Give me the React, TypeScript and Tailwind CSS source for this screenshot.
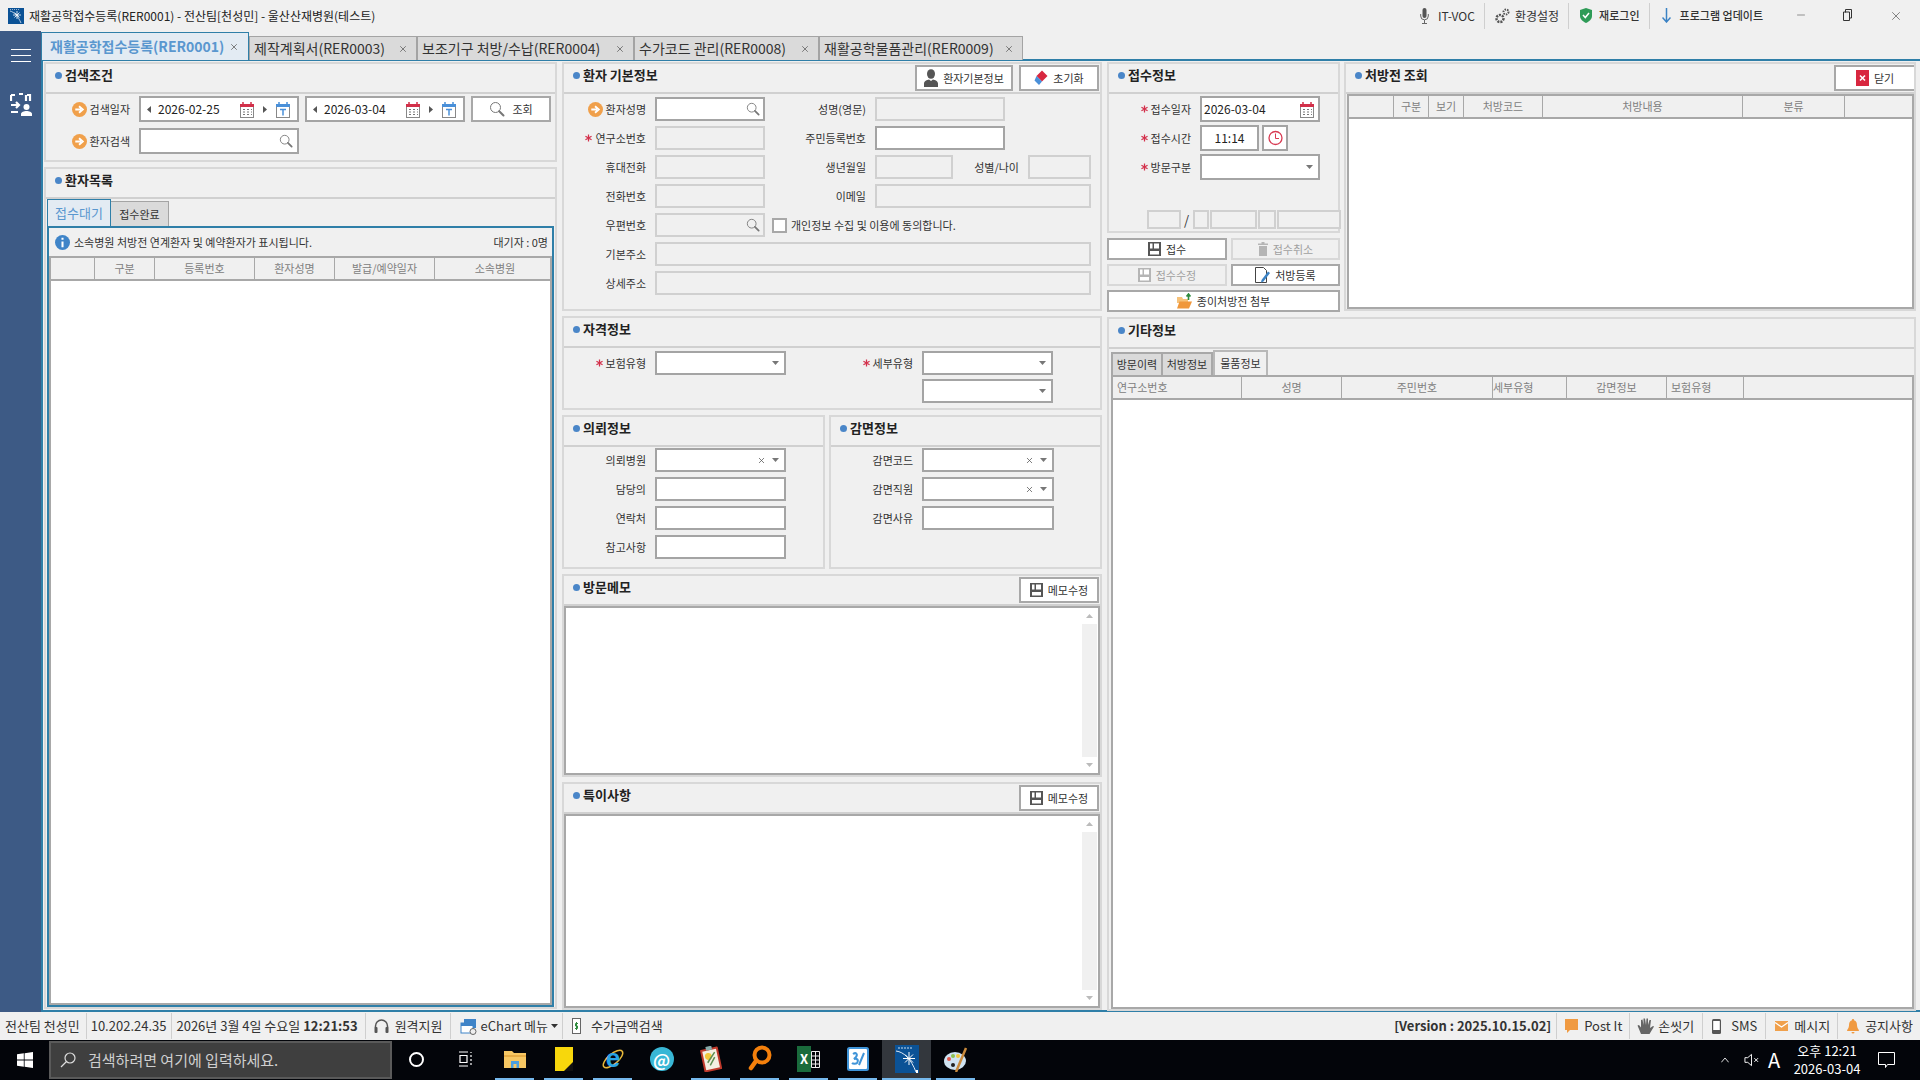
import React from "react";
import { X, Minus } from "lucide-react";

type P = { className?: string; children?: React.ReactNode };

const Search = ({ s = 14, c = "#777" }: { s?: number; c?: string }) => (
  <svg width={s} height={s} viewBox="0 0 16 16" fill="none" className="shrink-0">
    <circle cx="6.5" cy="6.5" r="5" stroke={c} strokeWidth="1" />
    <path d="M10.2 10.2 14.5 14.5" stroke={c} strokeWidth="2" strokeLinecap="round" />
  </svg>
);
const Arrow = () => (
  <svg width="15" height="15" viewBox="0 0 16 16" className="shrink-0">
    <circle cx="8" cy="8" r="8" fill="#f0a04b" />
    <path d="M3.5 8h6M7.5 4.5 11.5 8l-4 3.5" stroke="#fff" strokeWidth="2" fill="none" />
  </svg>
);
const Star = () => (
  <svg width="7" height="8" viewBox="0 0 8 8" className="shrink-0">
    <path d="M4 0v8M.5 2l7 4M7.5 2l-7 4" stroke="#d32f4a" strokeWidth="1.4" />
  </svg>
);
const Cal = ({ top = "#d2304a", t = false }: { top?: string; t?: boolean }) => (
  <svg width="16" height="17" viewBox="0 0 16 17" className="shrink-0">
    <rect x="1.5" y="3.5" width="13" height="13" fill="#fff" stroke="#888" />
    <rect x="1" y="3" width="14" height="3" fill={top} />
    <path d="M4 1v3M12 1v3" stroke={top} strokeWidth="1.5" />
    {t ? (
      <path d="M5 8.5h6M8 8.5v6" stroke={top} strokeWidth="1.5" />
    ) : (
      <path d="M4 8.5h2m2 0h2m2 0h1M4 11h2m2 0h2m2 0h1M4 13.5h2m2 0h2m2 0h1" stroke="#777" strokeWidth="1" />
    )}
  </svg>
);
const Tri = ({ d = "l" }: { d?: "l" | "r" }) => (
  <svg width="4" height="7" viewBox="0 0 4 7" className="shrink-0">
    <path d={d === "l" ? "M4 0v7L0 3.5z" : "M0 0v7l4-3.5z"} fill="#555" />
  </svg>
);
const Caret = () => (
  <svg width="7" height="4" viewBox="0 0 7 4" className="shrink-0">
    <path d="M0 0h7L3.5 4z" fill="#777" />
  </svg>
);
const Floppy = ({ c = "#555" }: { c?: string }) => (
  <svg width="13" height="14" viewBox="0 0 13 14" className="shrink-0">
    <path d="M0 0h13v14H0z" fill={c} />
    <path d="M2 1.5h2.5v5H2zM6 1.5h5v5H6zM2 9h9v3.5H2z" fill="#fff" />
  </svg>
);
const Person = () => (
  <svg width="14" height="18" viewBox="0 0 14 18" className="shrink-0">
    <ellipse cx="7" cy="5" rx="4" ry="4.8" fill="#555" />
    <path d="M0 18v-3.5C0 12 3 11 5 10.5L7 12l2-1.500c2 .5 5 1.500 5 4V18z" fill="#555" />
  </svg>
);
const Eraser = () => (
  <svg width="14" height="16" viewBox="0 0 14 16" className="shrink-0">
    <path d="M8 .5 13.500 6 8 11.500 2.500 6z" fill="#d8273f" />
    <path d="M2.500 6 8 11.500 5 15 .5 10.500z" fill="#4a90d9" />
  </svg>
);
const Trash = () => (
  <svg width="10" height="14" viewBox="0 0 10 14" className="shrink-0">
    <path d="M0 1.500h10V3H0zM3.500 0h3v1.500h-3zM1 4h8v10H1z" fill="#b5b5b5" />
  </svg>
);
const Edit = () => (
  <svg width="15" height="16" viewBox="0 0 15 16" className="shrink-0">
    <path d="M.5.5h8l3 3v12H.5z" fill="#fff" stroke="#444" />
    <path d="M13 4.500 15 6 8.500 14.500 6 15.500l.5-2.500z" fill="#3b82c4" />
  </svg>
);
const Folder = () => (
  <svg width="15" height="16" viewBox="0 0 15 16" className="shrink-0">
    <path d="M0 4h5l1 2h5v4H0z" fill="#f6c27a" />
    <path d="M0 15.500 2.500 8.500H15l-3 7z" fill="#f0983c" />
    <path d="M11.500 7V2M9.500 3.500l2-2.500 2 2.500" stroke="#2e8b3d" strokeWidth="1.600" fill="none" />
  </svg>
);
const Clock = () => (
  <svg width="15" height="18" viewBox="0 0 15 18" className="shrink-0">
    <circle cx="7.500" cy="9" r="6.500" fill="none" stroke="#d83a52" strokeWidth="1.300" />
    <path d="M7.500 4.500V9.500H11" fill="none" stroke="#d83a52" />
  </svg>
);

const Box = ({ className = "", children, off }: P & { off?: boolean }) => (
  <div
    className={
      "flex shrink-0 items-center text-[12px] text-[#222] border-2 " +
      (off ? "border-[#d0d0d0] bg-[#f0f0f0] " : "border-[#a4a4a4] bg-white ") +
      className
    }
  >
    {children}
  </div>
);

const Label = ({ className = "", star, arrow, children }: P & { star?: boolean; arrow?: boolean }) => (
  <div className={"flex shrink-0 items-center justify-end gap-[3px] text-[11px] text-[#333] " + className}>
    {star && <Star />}
    {arrow && <Arrow />}
    <span>{children}</span>
  </div>
);

const Btn = ({ className = "", children, off }: P & { off?: boolean }) => (
  <div
    className={
      "flex shrink-0 items-center justify-center gap-[5px] border-2 text-[11px] " +
      (off ? "border-[#d8d8d8] bg-[#f0f0f0] text-[#a0a0a0] " : "border-[#a8a8a8] bg-white text-[#333] ") +
      className
    }
  >
    {children}
  </div>
);

const Panel = ({
  className = "",
  title,
  action,
  children,
}: P & { title: string; action?: React.ReactNode }) => (
  <section className={"flex shrink-0 flex-col border-2 border-[#d8d8d8] " + className}>
    <header className="flex h-[30px] shrink-0 items-start justify-between border-b-[2px] border-[#d0d0d0] pl-[9px]">
      <div className="flex items-center gap-[3px] pt-[1px] text-[13px] font-bold leading-[20px] text-[#222]">
        <span className="h-[7px] w-[7px] rounded-full bg-[#4a86c8]" />
        {title}
      </div>
      {action}
    </header>
    {children}
  </section>
);

const Grid = ({
  className = "",
  cols,
}: {
  className?: string;
  cols: [string, string, string?][];
}) => (
  <div className={"flex flex-col border-2 border-[#a8a8a8] bg-white " + className}>
    <div className="flex h-[23px] shrink-0 border-b-2 border-[#a8a8a8] bg-[#f0f0f0]">
      {cols.map(([w, t, al], i) => (
        <div
          key={i}
          className={
            "flex shrink-0 items-center border-r border-[#a8a8a8] text-[11px] text-[#808080] " +
            (al || "justify-center ") +
            " " +
            w
          }
        >
          {t}
        </div>
      ))}
    </div>
  </div>
);

const DateField = ({ v, w }: { v: string; w?: string }) => (
  <Box className={"h-[26px] w-[160px] px-[6px] " + (w || "")}>
    <Tri />
    <span className="ml-[7px] w-[87px]">{v}</span>
    <Cal />
    <span className="mx-[8px]">
      <Tri d="r" />
    </span>
    <Cal top="#4a90d9" t />
  </Box>
);

const Scroll = () => (
  <div className="flex w-[15px] shrink-0 flex-col justify-between self-stretch bg-[#f0f0f0]">
    <div className="flex h-[16px] items-center justify-center bg-white">
      <svg width="7" height="4" viewBox="0 0 7 4">
        <path d="M0 4h7L3.500 0z" fill="#bbb" />
      </svg>
    </div>
    <div className="flex h-[16px] items-center justify-center bg-white">
      <svg width="7" height="4" viewBox="0 0 7 4">
        <path d="M0 0h7L3.500 4z" fill="#bbb" />
      </svg>
    </div>
  </div>
);

const Memo = ({ className = "", title }: { className?: string; title: string }) => (
  <Panel
    className={className}
    title={title}
    action={
      <Btn className="mr-px mt-px h-[26px] w-[80px]">
        <Floppy />
        메모수정
      </Btn>
    }
  >
    <div className="flex min-h-0 flex-1 justify-end border-2 border-[#a8a8a8] bg-white pr-px">
      <Scroll />
    </div>
  </Panel>
);

const Sep = ({ className = "" }: P) => <span className={"h-[26px] w-px shrink-0 bg-[#cfcfcf] " + className} />;

const TitleBar = () => (
  <div className="flex h-[31px] shrink-0 items-center bg-[#f0f0f0] text-[#222]">
    <svg width="16" height="16" viewBox="0 0 16 16" className="ml-[8px] shrink-0">
      <rect width="16" height="16" fill="#0b5296" />
      <path d="M2 3c4 1 8 5 11 12" stroke="#dfe9f5" strokeWidth=".8" fill="none" />
      <path d="M9 3v8M5 7h8M6.500 4.500l5 5M11.500 4.500l-5 5" stroke="#fff" strokeWidth=".8" />
      <path d="M2 1.500h9" stroke="#bcd" strokeWidth=".8" strokeDasharray="1 1" />
    </svg>
    <span className="ml-[5px] text-[12px] leading-none">재활공학접수등록(RER0001) - 전산팀[천성민] - 울산산재병원(테스트)</span>
    <div className="ml-auto flex items-center text-[#333]">
      <svg width="9" height="16" viewBox="0 0 9 16" className="shrink-0">
        <rect x="2.500" y="0" width="4" height="10" rx="2" fill="#555" />
        <path d="M.7 6v2a3.800 3.800 0 0 0 7.600 0V6M4.500 12v3M2 15.500h5" stroke="#666" fill="none" />
      </svg>
      <span className="ml-[9px] text-[12px]">IT-VOC</span>
      <Sep className="ml-[9px]" />
      <svg width="15" height="16" viewBox="0 0 15 16" className="ml-[10px] shrink-0">
        <circle cx="5" cy="10.500" r="3.500" fill="none" stroke="#555" strokeWidth="2.500" strokeDasharray="2 1" />
        <circle cx="11" cy="4" r="2.500" fill="none" stroke="#555" strokeWidth="2" strokeDasharray="1.500 1" />
      </svg>
      <span className="ml-[5px] text-[12px]">환경설정</span>
      <Sep className="ml-[9px]" />
      <svg width="12" height="15" viewBox="0 0 12 15" className="ml-[11px] shrink-0">
        <path d="M6 0 12 2v6c0 3.500-3 5.500-6 7-3-1.500-6-3.500-6-7V2z" fill="#2e9b57" />
        <path d="M3 7l2.300 2.500L9 5" stroke="#fff" strokeWidth="1.500" fill="none" />
      </svg>
      <span className="ml-[7px] text-[11px] font-medium">재로그인</span>
      <Sep className="ml-[9px]" />
      <svg width="9" height="15" viewBox="0 0 9 15" className="ml-[12px] shrink-0">
        <path d="M4.500 0v14M.5 9.500l4 4.500 4-4.500" stroke="#3b82c4" strokeWidth="1.500" fill="none" />
      </svg>
      <span className="ml-[9px] text-[11px] font-medium">프로그램 업데이트</span>
      <div className="ml-[14px] flex w-[143px] text-[#333]">
        <div className="flex w-[47px] justify-center">
          <Minus size={12} strokeWidth={1} />
        </div>
        <div className="flex w-[48px] justify-center">
          <svg width="11" height="12" viewBox="0 0 11 12" fill="none" stroke="#333">
            <path d="M2.500 3.500V.5h6v8.500H6.500M.5 3h6v8.500h-6z" />
          </svg>
        </div>
        <div className="flex w-[48px] justify-center">
          <X size={14} strokeWidth={1} />
        </div>
      </div>
    </div>
  </div>
);

const Tab = ({ className = "", children }: P) => (
  <div
    className={
      "mt-[4px] flex h-[24px] shrink-0 items-center justify-between border-x border-t border-[#a4a4a4] bg-[#dadada] pl-[4px] pr-[8px] text-[14px] text-[#333] " +
      className
    }
  >
    <span>{children}</span>
    <X size={10} color="#666" />
  </div>
);

const Tabs = () => (
  <div className="relative z-10 flex h-[29px] shrink-0 pt-px">
    <div className="flex h-[28px] w-[208px] shrink-0 items-center justify-between border-x border-t border-[#2f7fa8] bg-[#e3ebf3] pl-[8px] pr-[9px] text-[14px] font-bold text-[#5a97cf]">
      <span>재활공학접수등록(RER0001)</span>
      <X size={10} color="#666" />
    </div>
    <Tab className="w-[168px]">제작계획서(RER0003)</Tab>
    <Tab className="w-[217px]">보조기구 처방/수납(RER0004)</Tab>
    <Tab className="w-[185px]">수가코드 관리(RER0008)</Tab>
    <Tab className="w-[204px]">재활공학물품관리(RER0009)</Tab>
  </div>
);

const LeftColumn = () => (
  <div className="flex w-[513px] shrink-0 flex-col gap-[5px]">
    <Panel className="h-[100px]" title="검색조건">
      <div className="flex flex-col gap-[6px] pt-[2px]">
        <div className="flex items-center">
          <Label arrow className="w-[84px]">검색일자</Label>
          <DateField v="2026-02-25" w="ml-[9px]" />
          <DateField v="2026-03-04" w="ml-[6px]" />
          <Btn className="ml-[6px] h-[26px] w-[80px]">
            <Search s={16} />
            <span className="ml-[2px]">조회</span>
          </Btn>
        </div>
        <div className="flex items-center">
          <Label arrow className="w-[84px]">환자검색</Label>
          <Box className="ml-[9px] h-[26px] w-[160px] justify-end pr-[4px]">
            <Search />
          </Box>
        </div>
      </div>
    </Panel>
    <Panel className="h-[842px]" title="환자목록">
      <div className="flex h-[27px] shrink-0 items-end pl-px">
        <div className="flex h-[27px] w-[64px] items-center justify-center border-x border-t border-[#2f7fa8] bg-[#e3ebf3] text-[13px] text-[#5a97cf]">
          접수대기
        </div>
        <div className="flex h-[25px] w-[58px] items-center justify-center border-r border-t border-[#a4a4a4] bg-[#dadada] text-[11px] text-[#333]">
          접수완료
        </div>
      </div>
      <div className="mx-[1px] flex min-h-0 flex-1 flex-col border-2 border-[#2f7fa8]">
        <div className="flex h-[28px] shrink-0 items-center justify-between pl-[6px] pr-[4px] text-[11px] text-[#333]">
          <div className="flex items-center gap-[4px]">
            <svg width="15" height="15" viewBox="0 0 16 16" className="shrink-0">
              <circle cx="8" cy="8" r="8" fill="#3f84c8" />
              <path d="M8 3v2M8 7v6" stroke="#fff" strokeWidth="2.200" />
            </svg>
            소속병원 처방전 연계환자 및 예약환자가 표시됩니다.
          </div>
          <span>대기자 : 0명</span>
        </div>
        <Grid
          className="flex-1"
          cols={[
            ["w-[44px]", ""],
            ["w-[60px]", "구분"],
            ["w-[100px]", "등록번호"],
            ["w-[80px]", "환자성명"],
            ["w-[100px]", "발급/예약일자"],
            ["w-[120px] border-r-0", "소속병원"],
          ]}
        />
      </div>
    </Panel>
  </div>
);

const BasicInfo = () => (
  <Panel
    className="h-[249px]"
    title="환자 기본정보"
    action={
      <div className="mr-px mt-px flex gap-[6px]">
        <Btn className="h-[26px] w-[98px]">
          <Person />
          환자기본정보
        </Btn>
        <Btn className="h-[26px] w-[80px]">
          <Eraser />
          초기화
        </Btn>
      </div>
    }
  >
    <div className="flex flex-col gap-[5px] pt-[3px]">
      <div className="flex h-[24px]">
        <Label arrow className="w-[82px]">환자성명</Label>
        <Box className="ml-[9px] w-[110px] justify-end pr-[3px]">
          <Search />
        </Box>
        <Label className="w-[101px]">성명(영문)</Label>
        <Box off className="ml-[9px] w-[130px]" />
      </div>
      <div className="flex h-[24px]">
        <Label star className="w-[82px]">연구소번호</Label>
        <Box off className="ml-[9px] w-[110px]" />
        <Label className="w-[101px]">주민등록번호</Label>
        <Box className="ml-[9px] w-[130px]" />
      </div>
      <div className="flex h-[24px]">
        <Label className="w-[82px]">휴대전화</Label>
        <Box off className="ml-[9px] w-[110px]" />
        <Label className="w-[101px]">생년월일</Label>
        <Box off className="ml-[9px] w-[78px]" />
        <Label className="w-[66px]">성별/나이</Label>
        <Box off className="ml-[9px] w-[63px]" />
      </div>
      <div className="flex h-[24px]">
        <Label className="w-[82px]">전화번호</Label>
        <Box off className="ml-[9px] w-[110px]" />
        <Label className="w-[101px]">이메일</Label>
        <Box off className="ml-[9px] w-[216px]" />
      </div>
      <div className="flex h-[24px] items-center">
        <Label className="w-[82px]">우편번호</Label>
        <Box off className="ml-[9px] h-[24px] w-[110px] justify-end pr-[3px]">
          <Search />
        </Box>
        <span className="ml-[7px] h-[15px] w-[15px] shrink-0 border-2 border-[#a8a8a8] bg-white" />
        <span className="ml-[4px] text-[11px] text-[#333]">개인정보 수집 및 이용에 동의합니다.</span>
      </div>
      <div className="flex h-[24px]">
        <Label className="w-[82px]">기본주소</Label>
        <Box off className="ml-[9px] w-[436px]" />
      </div>
      <div className="flex h-[24px]">
        <Label className="w-[82px]">상세주소</Label>
        <Box off className="ml-[9px] w-[436px]" />
      </div>
    </div>
  </Panel>
);

const Sel = ({ className = "", clear }: { className?: string; clear?: boolean }) => (
  <Box className={"h-[24px] justify-end gap-[6px] pr-[5px] " + className}>
    {clear && <X size={9} color="#555" />}
    <Caret />
  </Box>
);

const MiddleColumn = () => (
  <div className="flex w-[540px] shrink-0 flex-col gap-[5px]">
    <BasicInfo />
    <Panel className="h-[94px]" title="자격정보">
      <div className="flex flex-col gap-[4px] pt-[3px]">
        <div className="flex">
          <Label star className="w-[82px]">보험유형</Label>
          <Sel className="ml-[9px] w-[131px]" />
          <Label star className="w-[127px]">세부유형</Label>
          <Sel className="ml-[9px] w-[131px]" />
        </div>
        <div className="flex pl-[358px]">
          <Sel className="w-[131px]" />
        </div>
      </div>
    </Panel>
    <div className="flex h-[154px] shrink-0 gap-[4px]">
      <Panel className="h-full w-[263px]" title="의뢰정보">
        <div className="flex flex-col gap-[5px] pt-[1px]">
          <div className="flex">
            <Label className="w-[82px]">의뢰병원</Label>
            <Sel clear className="ml-[9px] w-[131px]" />
          </div>
          <div className="flex">
            <Label className="w-[82px]">담당의</Label>
            <Box className="ml-[9px] h-[24px] w-[131px]" />
          </div>
          <div className="flex">
            <Label className="w-[82px]">연락처</Label>
            <Box className="ml-[9px] h-[24px] w-[131px]" />
          </div>
          <div className="flex">
            <Label className="w-[82px]">참고사항</Label>
            <Box className="ml-[9px] h-[24px] w-[131px]" />
          </div>
        </div>
      </Panel>
      <Panel className="h-full w-[273px]" title="감면정보">
        <div className="flex flex-col gap-[5px] pt-[1px]">
          <div className="flex">
            <Label className="w-[82px]">감면코드</Label>
            <Sel clear className="ml-[9px] w-[132px]" />
          </div>
          <div className="flex">
            <Label className="w-[82px]">감면직원</Label>
            <Sel clear className="ml-[9px] w-[132px]" />
          </div>
          <div className="flex">
            <Label className="w-[82px]">감면사유</Label>
            <Box className="ml-[9px] h-[24px] w-[132px]" />
          </div>
        </div>
      </Panel>
    </div>
    <Memo className="h-[203px]" title="방문메모" />
    <Memo className="h-[228px]" title="특이사항" />
  </div>
);

const Reception = () => (
  <div className="flex w-[233px] shrink-0 flex-col gap-[4px]">
    <Panel className="h-[171px]" title="접수정보">
      <div className="flex flex-col gap-[3px] pt-[2px]">
        <div className="flex">
          <Label star className="w-[82px]">접수일자</Label>
          <Box className="ml-[9px] h-[26px] w-[120px] justify-between pl-[2px] pr-[3px]">
            2026-03-04
            <Cal />
          </Box>
        </div>
        <div className="flex">
          <Label star className="w-[82px]">접수시간</Label>
          <Box className="ml-[9px] h-[26px] w-[59px] justify-center">11:14</Box>
          <Box className="ml-[3px] h-[26px] w-[26px] justify-center">
            <Clock />
          </Box>
        </div>
        <div className="flex">
          <Label star className="w-[82px]">방문구분</Label>
          <Box className="ml-[9px] h-[26px] w-[120px] justify-end pr-[5px]">
            <Caret />
          </Box>
        </div>
      </div>
      <div className="mt-[30px] flex items-center pl-[38px] text-[13px] text-[#333]">
        <Box off className="h-[19px] w-[34px]" />
        <span className="mx-[3px] w-[3px]">/</span>
        <Box off className="ml-[3px] h-[19px] w-[16px]" />
        <Box off className="ml-px h-[19px] w-[47px]" />
        <Box off className="ml-px h-[19px] w-[18px]" />
        <Box off className="ml-px h-[19px] w-[64px]" />
      </div>
    </Panel>
    <div className="flex gap-[4px] pt-px">
      <Btn className="h-[22px] w-[120px]">
        <Floppy />
        접수
      </Btn>
      <Btn off className="h-[22px] w-[109px]">
        <Trash />
        접수취소
      </Btn>
    </div>
    <div className="flex gap-[4px]">
      <Btn off className="h-[22px] w-[120px]">
        <Floppy c="#b5b5b5" />
        접수수정
      </Btn>
      <Btn className="h-[22px] w-[109px]">
        <Edit />
        처방등록
      </Btn>
    </div>
    <Btn className="h-[22px] w-[233px]">
      <Folder />
      종이처방전 첨부
    </Btn>
  </div>
);

const Rx = () => (
  <Panel
    className="h-[249px] w-[572px]"
    title="처방전 조회"
    action={
      <Btn className="mt-px h-[26px] w-[80px] border-r-0">
        <svg width="13" height="16" viewBox="0 0 13 16" className="shrink-0">
          <rect width="13" height="16" fill="#d8273f" />
          <path d="M4 5.500 9 10.500M9 5.500l-5 5" stroke="#fff" strokeWidth="1.600" />
        </svg>
        닫기
      </Btn>
    }
  >
    <Grid
      className="ml-px h-[215px]"
      cols={[
        ["w-[45px]", ""],
        ["w-[35px]", "구분"],
        ["w-[35px]", "보기"],
        ["w-[79px]", "처방코드"],
        ["w-[200px]", "처방내용"],
        ["w-[102px]", "분류"],
        ["w-[70px] border-r-0", ""],
      ]}
    />
  </Panel>
);

const Other = () => (
  <Panel className="h-[694px]" title="기타정보">
    <div className="flex h-[26px] shrink-0 items-end pl-[2px]">
      <div className="flex h-[23px] w-[52px] items-center justify-center border-2 border-b-0 border-[#a8a8a8] bg-[#dadada] text-[11px] text-[#333]">방문이력</div>
      <div className="flex h-[23px] w-[50px] items-center justify-center border-y-2 border-r-2 border-b-0 border-[#a8a8a8] bg-[#dadada] text-[11px] text-[#333]">처방정보</div>
      <div className="flex h-[25px] w-[55px] items-center justify-center border-x-2 border-t-2 border-[#b8b8b8] bg-[#f0f0f0] text-[11px] text-[#333]">물품정보</div>
    </div>
    <Grid
      className="ml-[2px] flex-1"
      cols={[
        ["w-[129px]", "연구소번호", "justify-start pl-[4px]"],
        ["w-[100px]", "성명"],
        ["w-[151px]", "주민번호"],
        ["w-[74px]", "세부유형", "justify-start"],
        ["w-[100px]", "감면정보"],
        ["w-[77px]", "보험유형", "justify-start pl-[4px]"],
        ["w-[170px] border-r-0", ""],
      ]}
    />
  </Panel>
);

const StatusBar = () => (
  <div className="flex h-[28px] shrink-0 items-center justify-between bg-[#f0f0f0] text-[13px] text-[#333]">
    <div className="flex items-center">
      <span className="ml-[5px]">전산팀 천성민</span>
      <Sep className="ml-[6px]" />
      <span className="ml-[4px]">10.202.24.35</span>
      <Sep className="ml-[5px]" />
      <span className="ml-[4px]">
        2026년 3월 4일 수요일 <b className="font-bold">12:21:53</b>
      </span>
      <Sep className="ml-[7px]" />
      <svg width="15" height="15" viewBox="0 0 15 15" fill="none" className="ml-[8px] shrink-0">
        <path d="M1.500 9V7a6 6 0 0 1 12 0v2" stroke="#555" strokeWidth="1.500" />
        <rect x="0.500" y="8" width="3" height="6" rx="1" fill="#555" />
        <rect x="11.500" y="8" width="3" height="6" rx="1" fill="#555" />
      </svg>
      <span className="ml-[6px]">원격지원</span>
      <Sep className="ml-[7px]" />
      <svg width="17" height="17" viewBox="0 0 17 17" className="ml-[9px] shrink-0">
        <rect x="4" y="1" width="12" height="9" fill="#3f84c8" />
        <rect x="1" y="5" width="12" height="10" fill="#fff" stroke="#3f84c8" />
        <rect x="1" y="5" width="12" height="3" fill="#3f84c8" />
        <circle cx="13" cy="13.500" r="3" fill="#eee" stroke="#666" />
      </svg>
      <span className="ml-[4px]">eChart 메뉴</span>
      <svg width="7" height="4" viewBox="0 0 7 4" className="ml-[3px] shrink-0">
        <path d="M0 0h7L3.500 4z" fill="#333" />
      </svg>
      <Sep className="ml-[4px]" />
      <svg width="9" height="16" viewBox="0 0 9 16" className="ml-[9px] shrink-0">
        <rect x=".5" y=".5" width="8" height="15" fill="#fff" stroke="#666" />
        <path d="M6 5.500H3.500v2.500H5.500v2.500H3M4.500 4v8" stroke="#2e8b3d" fill="none" />
      </svg>
      <span className="ml-[10px]">수가금액검색</span>
    </div>
    <div className="flex items-center pr-[7px]">
      <b className="font-bold">[Version : 2025.10.15.02]</b>
      <Sep className="ml-[5px]" />
      <svg width="13" height="14" viewBox="0 0 13 14" className="ml-[8px] shrink-0">
        <path d="M0 0h13v11H5l-3 3v-3H0z" fill="#f09a41" />
      </svg>
      <span className="ml-[6px]">Post It</span>
      <Sep className="ml-[7px]" />
      <svg width="17" height="18" viewBox="0 0 17 18" className="ml-[7px] shrink-0">
        <path d="M4 17 .5 8.500l1.500-.5L4 10.500V3l1.500-.5L6.500 8V1.500h1.500L9 8l.5-6.500H11L11 8l1.500-5H14l-1 8 3-2 1 .5-4.500 7.500z" fill="#666" />
      </svg>
      <span className="ml-[4px]">손씻기</span>
      <Sep className="ml-[8px]" />
      <svg width="9" height="15" viewBox="0 0 9 15" className="ml-[9px] shrink-0">
        <rect width="9" height="15" rx="1.500" fill="#555" />
        <rect x="1.200" y="2" width="6.600" height="9" fill="#fff" />
      </svg>
      <span className="ml-[10px]">SMS</span>
      <Sep className="ml-[8px]" />
      <svg width="13" height="10" viewBox="0 0 13 10" className="ml-[9px] shrink-0">
        <rect width="13" height="10" fill="#f0a04b" />
        <path d="M0 1.500 6.500 6 13 1.500" stroke="#fff" strokeWidth="1.200" fill="none" />
      </svg>
      <span className="ml-[6px]">메시지</span>
      <Sep className="ml-[7px]" />
      <svg width="12" height="15" viewBox="0 0 12 15" className="ml-[9px] shrink-0">
        <path d="M6 0a1 1 0 0 1 1 1.300c2.500.7 3 3 3 5.200 0 2.500 2 4 2 5.500H0c0-1.500 2-3 2-5.500 0-2.200.5-4.500 3-5.200A1 1 0 0 1 6 0zM4.500 13h3a1.500 1.500 0 0 1-3 0z" fill="#f09a41" />
      </svg>
      <span className="ml-[6px]">공지사항</span>
    </div>
  </div>
);

const Slot = ({ children, on, active }: P & { on?: boolean; active?: boolean }) => (
  <div className={"flex h-[40px] w-[49px] shrink-0 flex-col " + (active ? "bg-[#33373d]" : "")}>
    <div className="flex flex-1 items-center justify-center">{children}</div>
    <div className={"h-[2px] " + (on ? (active ? "bg-[#76b9ed]" : "mx-[5px] bg-[#76b9ed]") : "")} />
  </div>
);

const Taskbar = () => (
  <div className="flex h-[40px] shrink-0 items-center bg-[#03050a] text-white">
    <div className="flex h-[40px] w-[49px] shrink-0 items-center justify-center">
      <svg width="16" height="16" viewBox="0 0 16 16">
        <path d="M0 2.300 6.800 1.300V7.600H0zM7.600 1.200 16 0V7.600H7.600zM0 8.400H6.800V14.700L0 13.700zM7.600 8.400H16V16L7.600 14.800z" fill="#fff" />
      </svg>
    </div>
    <div className="flex h-[38px] w-[343px] shrink-0 items-center border-2 border-[#5a5a5a] bg-[#3f3f3f] pl-[9px] text-[15px] text-[#cfcfcf]">
      <svg width="16" height="16" viewBox="0 0 16 16" fill="none" stroke="#ddd" strokeWidth="1.200" className="shrink-0">
        <circle cx="10" cy="6" r="5" />
        <path d="M6.500 9.500 1 15" />
      </svg>
      <span className="ml-[12px]">검색하려면 여기에 입력하세요.</span>
    </div>
    <Slot>
      <span className="h-[15px] w-[15px] rounded-full border-2 border-white" />
    </Slot>
    <Slot>
      <svg width="16" height="16" viewBox="0 0 16 16" fill="none" stroke="#fff" strokeWidth="1.200">
        <path d="M1 1h9M1 15h9M2 4.500h7v7H2zM13 1v1M13 4v2M13 8v2M13 12v2" />
      </svg>
    </Slot>
    <Slot on>
      <svg width="22" height="20" viewBox="0 0 22 20">
        <path d="M0 2h8l2 2h12v15H0z" fill="#f6c763" />
        <path d="M0 6h22v2H0z" fill="#e6ac45" />
        <path d="M7 12h8v7H7z" fill="#4a9fe0" />
        <path d="M9.500 15h3v4h-3z" fill="#f6c763" />
      </svg>
    </Slot>
    <Slot on>
      <svg width="18" height="24" viewBox="0 0 18 24">
        <path d="M0 0h18v24H0z" fill="#f7d70c" />
        <path d="M18 15v9H9z" fill="#111" />
        <path d="M18 15 9 24v-9z" fill="#f7d70c" opacity="0" />
      </svg>
    </Slot>
    <Slot on>
      <svg width="26" height="26" viewBox="0 0 26 26">
        <ellipse cx="13" cy="13" rx="12" ry="5" fill="none" stroke="#e8b93a" strokeWidth="1.500" transform="rotate(-40 13 13)" />
        <text x="13" y="21" textAnchor="middle" fontSize="26" fontWeight="700" fill="#28a4e4" fontFamily="Liberation Sans">e</text>
      </svg>
    </Slot>
    <Slot>
      <div className="flex h-[24px] w-[24px] items-center justify-center rounded-full bg-[#38b7d6] text-[17px] font-bold leading-none text-white">@</div>
    </Slot>
    <Slot on>
      <svg width="22" height="26" viewBox="0 0 22 26">
        <g transform="rotate(-12 11 13)">
          <rect x="2" y="2" width="18" height="23" rx="1" fill="#c0392b" />
          <rect x="4" y="4" width="14" height="19" fill="#f4efe2" />
          <circle cx="9" cy="10" r="3.500" fill="#f2c83c" />
          <path d="M7 16 16 7M9 19l6-7" stroke="#5f8f52" strokeWidth="1.500" />
          <rect x="8" y="0" width="6" height="4" fill="#8aa" />
        </g>
      </svg>
    </Slot>
    <Slot on>
      <svg width="24" height="28" viewBox="0 0 24 28" fill="none">
        <circle cx="14" cy="10" r="7.500" stroke="#f4800c" strokeWidth="4" />
        <path d="M8 16 3 23" stroke="#f4800c" strokeWidth="4.500" strokeLinecap="round" />
      </svg>
    </Slot>
    <Slot on>
      <div className="flex items-center">
        <div className="flex h-[26px] w-[14px] items-center justify-center bg-[#1a6b3c] text-[13px] font-bold text-white">X</div>
        <svg width="9" height="17" viewBox="0 0 9 17" fill="none" stroke="#eee">
          <path d="M.5.5h8v16h-8zM.5 5h8M.5 9h8M.5 13h8M4.500 .5v16" />
        </svg>
      </div>
    </Slot>
    <Slot on>
      <svg width="22" height="24" viewBox="0 0 22 24">
        <rect width="22" height="24" rx="2.500" fill="#3f94d8" />
        <rect x="2" y="2" width="18" height="20" rx="1" fill="#fff" />
        <path d="M6 7c3-2 5 0 3 3l-2 2c3-1 5 1 3 4-1 1-4 1-5 0M12 18l5-12" stroke="#3f94d8" strokeWidth="2" fill="none" />
      </svg>
    </Slot>
    <Slot on active>
      <svg width="24" height="28" viewBox="0 0 24 28">
        <rect width="24" height="28" fill="#0b5296" />
        <path d="M1 6c8 1 15 8 20 21" stroke="#dfe9f5" strokeWidth="1" fill="none" />
        <path d="M14 7v13M8 13.500h12M10 9.500l8 8M18 9.500l-8 8" stroke="#fff" strokeWidth="1" />
        <path d="M3 3h15" stroke="#cde" strokeWidth="1" strokeDasharray="2 1" />
        <rect x="21" y="25" width="2" height="3" fill="#fff" />
      </svg>
    </Slot>
    <Slot on>
      <svg width="24" height="26" viewBox="0 0 24 26">
        <ellipse cx="11" cy="15" rx="11" ry="9" fill="#cfe3f2" />
        <circle cx="5" cy="13" r="2" fill="#e0584c" />
        <circle cx="9" cy="10" r="2" fill="#8cc152" />
        <circle cx="14" cy="10" r="2" fill="#f2c83c" />
        <circle cx="9" cy="19" r="2" fill="#222" />
        <path d="M12 26 22 2" stroke="#c98a3c" strokeWidth="2.500" />
      </svg>
    </Slot>
    <div className="ml-auto flex items-center pr-[25px]">
      <svg width="8" height="6" viewBox="0 0 12 8" fill="none" stroke="#fff" strokeWidth="1.300" className="shrink-0">
        <path d="M.5 7.500 6 1l5.500 6.500" />
      </svg>
      <svg width="15" height="14" viewBox="0 0 16 14" fill="none" stroke="#fff" className="ml-[15px] shrink-0">
        <path d="M1 4.500h3L8 1v12L4 9.500H1zM11 5l4 4M15 5l-4 4" />
      </svg>
      <span className="ml-[9px] w-[13px] text-[20px] leading-none">A</span>
      <div className="ml-[12px] flex w-[68px] flex-col items-center text-[13px] leading-[18px]">
        <span>오후 12:21</span>
        <span>2026-03-04</span>
      </div>
      <svg width="17" height="17" viewBox="0 0 17 17" fill="none" stroke="#fff" className="ml-[17px] shrink-0">
        <path d="M.5.5h16v12H9.500l-2 3v-3H.5z" />
      </svg>
    </div>
  </div>
);

export default function App() {
  return (
    <div className="flex h-[1080px] w-[1920px] flex-col overflow-hidden bg-[#f0f0f0] font-['Noto_Sans_CJK_KR','Noto_Sans',sans-serif]">
      <TitleBar />
      <div className="flex h-[981px] shrink-0">
        <aside className="flex w-[41px] shrink-0 flex-col items-center bg-[#3d5a85] pt-[18px]">
          <div className="flex w-[20px] flex-col gap-[5px]">
            <span className="h-px bg-white" />
            <span className="h-px bg-white" />
            <span className="h-px bg-white" />
          </div>
          <svg width="22" height="24" viewBox="0 0 22 24" className="mt-[31px]" fill="none" stroke="#fff" strokeWidth="2.200">
            <path d="M1 2h4M1 2v6M9 1h4M17 2h3v6M1 12h8M6 9l3 3-3 3M1 19h7M16 2v6" />
            <circle cx="16.500" cy="14" r="3" fill="#fff" stroke="none" />
            <path d="M11 23v-2c0-2 3-3 5.500-3s5.500 1 5.500 3v2z" fill="#fff" stroke="none" />
          </svg>
        </aside>
        <main className="flex min-w-0 flex-1 flex-col">
          <Tabs />
          <div className="-mt-px flex h-[953px] shrink-0 gap-[5px] border-y-2 border-l-2 border-[#2f7fa8] pl-[1px] pt-[1px]">
            <LeftColumn />
            <MiddleColumn />
            <div className="flex w-[809px] shrink-0 flex-col gap-[5px] pl-[-1px]">
              <div className="flex gap-[4px]">
                <Reception />
                <Rx />
              </div>
              <Other />
            </div>
          </div>
        </main>
      </div>
      <StatusBar />
      <Taskbar />
    </div>
  );
}
